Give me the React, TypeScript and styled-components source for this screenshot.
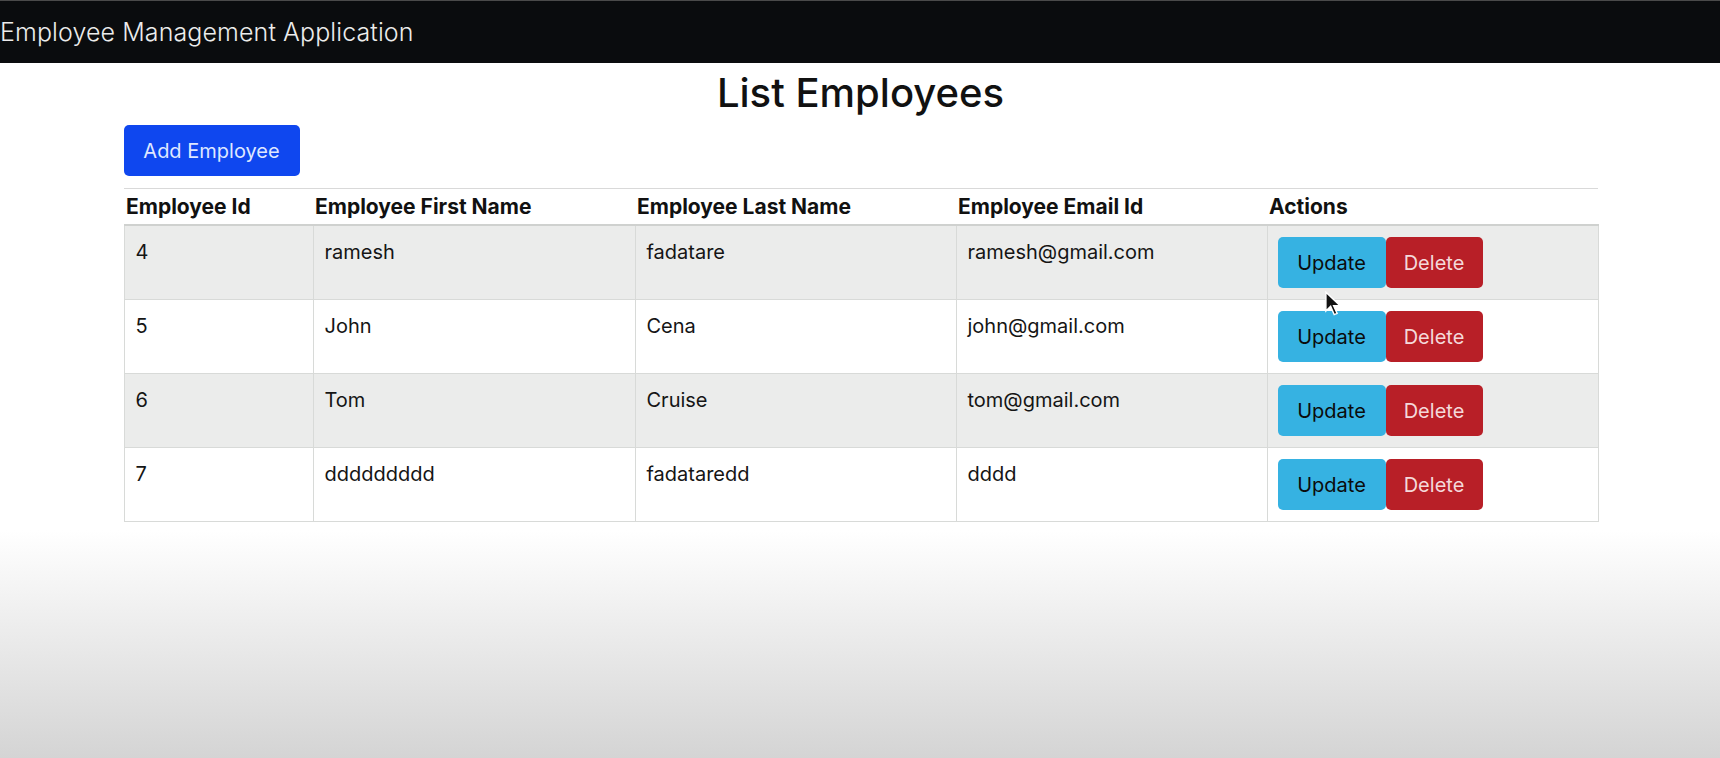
import styled, { createGlobalStyle } from 'styled-components';

interface IEmployee {
  id: number;
  firstName: string;
  lastName: string;
  emailId: string;
}

const employees: IEmployee[] = [
  { id: 4, firstName: 'ramesh', lastName: 'fadatare', emailId: 'ramesh@gmail.com' },
  { id: 5, firstName: 'John', lastName: 'Cena', emailId: 'john@gmail.com' },
  { id: 6, firstName: 'Tom', lastName: 'Cruise', emailId: 'tom@gmail.com' },
  { id: 7, firstName: 'ddddddddd', lastName: 'fadataredd', emailId: 'dddd' },
];

const columns = [
  { label: 'Employee Id', width: 189 },
  { label: 'Employee First Name', width: 322 },
  { label: 'Employee Last Name', width: 321 },
  { label: 'Employee Email Id', width: 311 },
  { label: 'Actions', width: 331 },
];

const GlobalStyle = createGlobalStyle`
  html, body {
    margin: 0;
    padding: 0;
  }
  body {
    min-height: 758px;
    font-family: Inter, "Liberation Sans", sans-serif;
    color: #111;
    background: linear-gradient(to bottom, #fff 0, #fff 530px, #d4d4d4 758px);
    overflow: hidden;
  }
`;

const Page = styled.div`
  position: relative;
  min-height: 758px;
`;

const Navbar = styled.header`
  height: 63px;
  display: flex;
  align-items: center;
  background: #0a0c0e;
  border-top: 1px solid #4a4a4a;
  box-sizing: border-box;
`;

const Brand = styled.span`
  color: #ececec;
  font-size: 25px;
  font-weight: 300;
  letter-spacing: 0.1px;
`;

const Container = styled.main`
  width: 1474px;
  margin: 0 auto;
  padding-left: 1px;
`;

const Title = styled.h2`
  margin: 5px 0 0;
  text-align: center;
  font-size: 40px;
  font-weight: 500;
  line-height: 50px;
  color: #111;
`;

const Toolbar = styled.div`
  display: flex;
  margin-top: 7px;
`;

const Button = styled.button<{ $variant: 'primary' | 'info' | 'danger' }>`
  height: 51px;
  padding: 0 17px;
  border: none;
  border-radius: 5px;
  font-family: inherit;
  font-size: 20px;
  cursor: pointer;
  background: ${(p) =>
    p.$variant === 'primary' ? '#0f47ef' : p.$variant === 'info' ? '#36b2e2' : '#b81f27'};
  color: ${(p) =>
    p.$variant === 'primary' ? '#dfe7ff' : p.$variant === 'info' ? '#0b0b0b' : '#f4d9da'};
`;

const AddButton = styled(Button)`
  width: 176px;
`;

const ActionButton = styled(Button)<{ $w: number }>`
  width: ${(p) => p.$w}px;
  padding: 0;
`;

const Table = styled.table`
  width: 100%;
  margin-top: 12px;
  border-collapse: collapse;
  table-layout: fixed;
  font-size: 20px;
`;

const Th = styled.th`
  height: 35px;
  padding: 0 2px;
  text-align: left;
  font-weight: 700;
  font-size: 21px;
  color: #111;
  border-top: 1px solid #d9d9d9;
  border-bottom: 2px solid #cfd1cf;
  white-space: nowrap;
`;

const Row = styled.tr<{ $striped: boolean }>`
  background: ${(p) => (p.$striped ? '#ebeceb' : '#fff')};
`;

const Td = styled.td`
  padding: 11px 11px 0;
  vertical-align: top;
  line-height: 31px;
  border: 1px solid #d8dad8;
  color: #151515;
`;

const ActionCell = styled(Td)`
  padding: 11px 10px;
`;

const Actions = styled.div`
  display: flex;
`;

const Cursor = styled.svg`
  position: absolute;
  left: 1324px;
  top: 291px;
`;

export default function App() {
  return (
    <Page>
      <GlobalStyle />
      <Navbar>
        <Brand>Employee Management Application</Brand>
      </Navbar>
      <Container>
        <Title>List Employees</Title>
        <Toolbar>
          <AddButton $variant="primary">Add Employee</AddButton>
        </Toolbar>
        <Table>
          <colgroup>
            {columns.map((c) => (
              <col key={c.label} style={{ width: c.width }} />
            ))}
          </colgroup>
          <thead>
            <tr>
              {columns.map((c) => (
                <Th key={c.label}>{c.label}</Th>
              ))}
            </tr>
          </thead>
          <tbody>
            {employees.map((e, i) => (
              <Row key={e.id} $striped={i % 2 === 0}>
                <Td>{e.id}</Td>
                <Td>{e.firstName}</Td>
                <Td>{e.lastName}</Td>
                <Td>{e.emailId}</Td>
                <ActionCell>
                  <Actions>
                    <ActionButton $variant="info" $w={108}>
                      Update
                    </ActionButton>
                    <ActionButton $variant="danger" $w={97}>
                      Delete
                    </ActionButton>
                  </Actions>
                </ActionCell>
              </Row>
            ))}
          </tbody>
        </Table>
      </Container>
      <Cursor width="18" height="26" viewBox="0 0 14 22">
        <path d="M1 1 L1 17 L5 13 L8 20 L10.5 19 L7.5 12.5 L13 12.5 Z" fill="#111" stroke="#fff" strokeWidth="1.2" />
      </Cursor>
    </Page>
  );
}
